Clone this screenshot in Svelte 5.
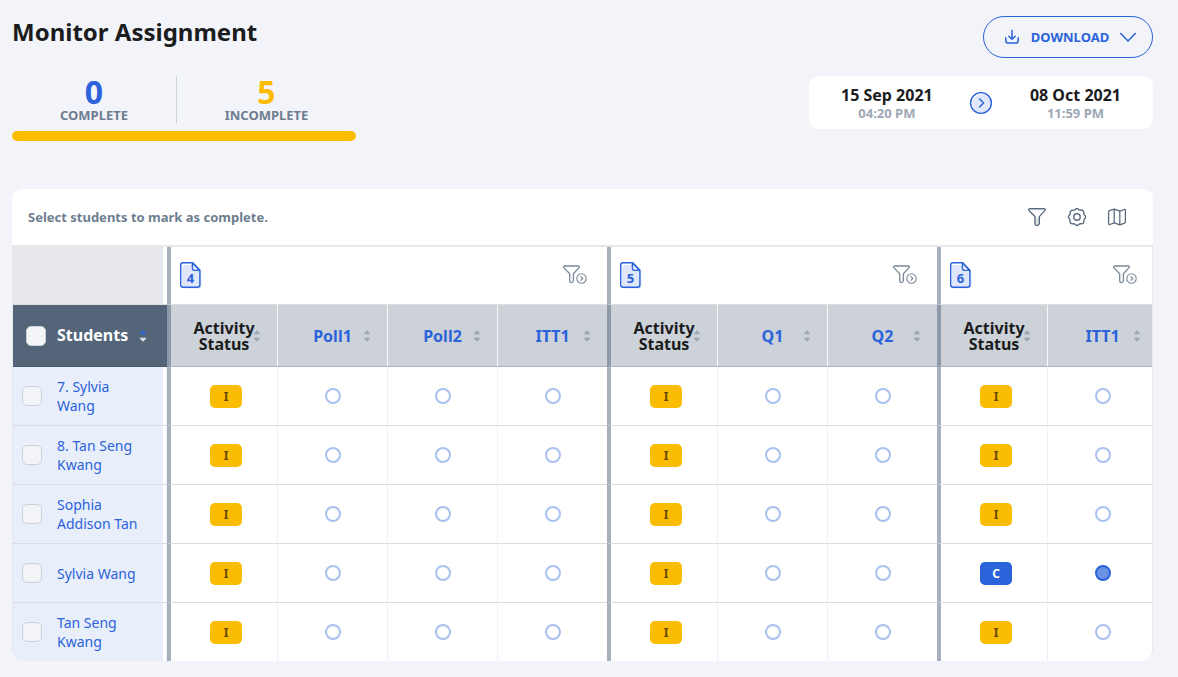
<script>
  const groups = [
    { number: 4, activities: ['Poll1', 'Poll2', 'ITT1'] },
    { number: 5, activities: ['Q1', 'Q2'] },
    { number: 6, activities: ['ITT1'] }
  ];

  let students = $state([
    { name: '7. Sylvia Wang', selected: false, completed: [] },
    { name: '8. Tan Seng Kwang', selected: false, completed: [] },
    { name: 'Sophia Addison Tan', selected: false, completed: [] },
    { name: 'Sylvia Wang', selected: false, completed: [6] },
    { name: 'Tan Seng Kwang', selected: false, completed: [] }
  ]);

  let allSelected = $derived(students.every((s) => s.selected));

  function toggleAll(event) {
    const value = event.currentTarget.checked;
    students.forEach((s) => (s.selected = value));
  }
</script>

{#snippet sorter(label, ascending)}
  <button class="sorter" class:ascending aria-label={label}>
    <svg width="8" height="12" viewBox="0 0 8 12">
      <path class="up" d="M4 .3 7 3.2V4.3H1V3.2Z" />
      <path class="down" d="M4 11.7 7 8.8V7.7H1V8.8Z" />
    </svg>
  </button>
{/snippet}

<main class="page">
  <header class="top">
    <div class="overview">
      <h1>Monitor Assignment</h1>
      <div class="stats">
        <div class="stat complete"><strong>0</strong><span>COMPLETE</span></div>
        <div class="stat incomplete"><strong>5</strong><span>INCOMPLETE</span></div>
      </div>
      <div class="bar"></div>
    </div>

    <div class="side">
      <button class="download">
        <svg width="16" height="16" viewBox="0 0 16 16" fill="none" stroke="currentColor" stroke-width="1.5" stroke-linecap="round" stroke-linejoin="round">
          <path d="M8 1.5V10M4.8 7.2 8 10.2 11.2 7.2M1.8 8.8V11.8Q1.8 14 4 14H12Q14.2 14 14.2 11.8V8.8" />
        </svg>
        <span>DOWNLOAD</span>
        <svg width="16" height="16" viewBox="0 0 16 16" fill="none" stroke="currentColor" stroke-width="1.5" stroke-linecap="round" stroke-linejoin="round">
          <path d="M.8 4.5 8 12 15.2 4.5" />
        </svg>
      </button>
      <div class="dates">
        <div class="date"><strong>15 Sep 2021</strong><span>04:20 PM</span></div>
        <svg class="arrow" width="24" height="24" viewBox="0 0 24 24" fill="none" stroke="#2a63da" stroke-linecap="round" stroke-linejoin="round">
          <circle cx="12" cy="12" r="11" fill="#fff" stroke="none" />
          <circle cx="12.8" cy="12.8" r="9.5" fill="#dfe7f8" stroke="none" />
          <circle cx="12" cy="12" r="10.4" stroke-width="1.4" />
          <path d="M10.6 8 14.6 12 10.6 16" stroke-width="1.4" />
        </svg>
        <div class="date"><strong>08 Oct 2021</strong><span>11:59 PM</span></div>
      </div>
    </div>
  </header>

  <section class="card">
    <div class="toolbar">
      <p>Select students to mark as complete.</p>
      <div class="tools">
        <button aria-label="Filter">
          <svg width="20" height="20" viewBox="0 0 20 20" fill="none" stroke="currentColor" stroke-width="1.4" stroke-linejoin="round">
            <path d="M8.4 10.5 12 10.5 11.8 16 9.8 18.2 8.6 18Z" fill="#e3e7ec" stroke="none" />
            <path d="M2.4 1.8H17.6Q18.7 2.2 18 3.4L12.3 9.6V16.6Q11.7 18.2 10 18.5 8.2 18.5 8 17V9.6L2 3.4Q1.3 2.2 2.4 1.8Z" />
          </svg>
        </button>
        <button aria-label="Settings">
          <svg width="20" height="20" viewBox="0 0 20 20" fill="none" stroke="currentColor" stroke-width="1.4" stroke-linejoin="round">
            <path d="M8 2.7Q10 .2 12 2.7 12.7 3.4 13.8 3.1 16.9 2.8 16.8 6 16.7 7.2 17.5 8 19.7 10 17.5 12 16.7 12.8 16.9 14 17 17 13.9 16.8 12.7 16.6 12 17.3 10 19.7 8 17.3 7.3 16.6 6.1 16.8 3 17.1 3.1 14 3.3 12.8 2.5 12 .3 10 2.5 8 3.3 7.2 3.2 6 3.1 2.9 6.2 3.1 7.3 3.4 8 2.7Z" />
            <circle cx="10" cy="10" r="3.2" />
          </svg>
        </button>
        <button aria-label="Map">
          <svg width="20" height="20" viewBox="0 0 20 20" fill="none" stroke="currentColor" stroke-width="1.3" stroke-linejoin="round">
            <path d="M1.6 4.8Q1.7 4 2.4 3.7L7.2 2.1 12.8 4.1 17.2 2.5Q18.4 2.3 18.4 3.4V15Q18.3 15.8 17.6 16.1L12.8 17.8 7.2 15.8 2.8 17.5Q1.6 17.7 1.6 16.6Z" />
            <path d="M7.2 2.1V15.8M12.8 4.1V17.8" />
          </svg>
        </button>
      </div>
    </div>

    <div class="scroller">
      <table>
        <colgroup>
          <col class="student-col" />
          {#each groups as group}
            <col span={group.activities.length + 1} />
          {/each}
        </colgroup>
        <thead>
          <tr class="groups">
            <td class="corner"></td>
            {#each groups as group}
              <th class="divider" colspan={group.activities.length + 1} scope="colgroup">
                <div class="group">
                  <svg width="24" height="28" viewBox="0 0 24 28" fill="none" stroke="#2a63da" stroke-width="1.4" stroke-linejoin="round">
                    <path d="M5 4H14.5L22.5 11V25Q22.5 27.5 20 27.5H5Q3 27.5 3 25.5V6Q3 4 5 4Z" fill="#dfe7f8" stroke="none" />
                    <path d="M4 1.7H13.8L20.9 9.2V23.8Q20.9 26.3 18.4 26.3H4.2Q1.7 26.3 1.7 23.8V4.2Q1.7 1.7 4.2 1.7Z" />
                    <path d="M13.4 1.9V7Q13.4 9.4 15.8 9.4H20.7Z" fill="#f3f6fd" />
                    <text x="11.5" y="22" text-anchor="middle">{group.number}</text>
                  </svg>
                  <button aria-label="Filter activity {group.number}">
                    <svg width="26" height="22" viewBox="0 0 26 22" fill="none" stroke="currentColor" stroke-width="1.3" stroke-linejoin="round">
                      <path d="M2.3 2H16.8Q17.8 2.5 17.1 3.6L11.4 9.8V16.8Q11 18.4 9.3 18.6 7.8 18.6 7.7 17V9.8L1.8 3.6Q1.2 2.5 2.3 2Z" />
                      <circle cx="19.5" cy="14.5" r="4.7" fill="#fff" stroke-width="1.1" />
                      <path d="M18.5 12.3 20.9 14.5 18.5 16.7" stroke-width="1.1" />
                    </svg>
                  </button>
                </div>
              </th>
            {/each}
          </tr>
          <tr class="heads">
            <th class="students" scope="col">
              <div class="student head">
                <input type="checkbox" aria-label="Select all students" checked={allSelected} onchange={toggleAll} />
                <span>Students</span>
                {@render sorter('Sort by student', true)}
              </div>
            </th>
            {#each groups as group}
              <th class="divider" scope="col">
                <div class="head-cell">
                  <span>Activity<br />Status</span>
                  {@render sorter('Sort by activity status', false)}
                </div>
              </th>
              {#each group.activities as activity}
                <th scope="col">
                  <div class="head-cell">
                    <a href="#activity">{activity}</a>
                    {@render sorter(`Sort by ${activity}`, false)}
                  </div>
                </th>
              {/each}
            {/each}
          </tr>
        </thead>
        <tbody>
          {#each students as student, i}
            <tr>
              <th class="name" scope="row">
                <div class="student">
                  <input type="checkbox" aria-labelledby="student-{i}" bind:checked={student.selected} />
                  <a href="#student" id="student-{i}">{student.name}</a>
                </div>
              </th>
              {#each groups as group}
                {@const done = student.completed.includes(group.number)}
                <td class="divider"><span class="badge" class:done>{done ? 'C' : 'I'}</span></td>
                {#each group.activities as activity}
                  <td><span class="dot" class:done></span></td>
                {/each}
              {/each}
            </tr>
          {/each}
        </tbody>
      </table>
    </div>
  </section>
</main>

<style>
  :global(body) {
    margin: 0;
    background: #f3f4f9;
    font-family: "Noto Sans", sans-serif;
    color: #1b1c1d;
  }
  * {
    box-sizing: border-box;
  }
  button {
    border: 0;
    padding: 0;
    background: none;
    color: inherit;
    font: inherit;
    cursor: pointer;
  }
  a {
    color: #2a63da;
    text-decoration: none;
  }
  svg {
    display: block;
  }
  strong {
    font-weight: 700;
  }
  .page {
    padding: 16px 25px 16px 12px;
  }
  .top {
    display: flex;
    justify-content: space-between;
    margin-bottom: 48px;
  }
  .overview,
  .side {
    width: 344px;
  }
  h1 {
    margin: 0 0 28px;
    font-size: 24px;
    line-height: 32px;
  }
  .stats {
    display: grid;
    grid-template-columns: 165px 1fr;
    height: 47px;
    margin-bottom: 8px;
  }
  .stat {
    display: flex;
    flex-direction: column;
    align-items: center;
    font-weight: 700;
    font-size: 13px;
    line-height: 15px;
    color: #6e7d90;
  }
  .complete {
    border-right: 1px solid #cdd2d9;
  }
  .stat strong {
    font-size: 32px;
    line-height: 32px;
    color: #2a63da;
  }
  .incomplete strong {
    color: #fbbc04;
  }
  .bar {
    height: 10px;
    border-radius: 5px;
    background: #fbbc04;
  }
  .side {
    display: flex;
    flex-direction: column;
    align-items: flex-end;
    gap: 18px;
  }
  .download {
    display: flex;
    align-items: center;
    justify-content: space-between;
    width: 170px;
    height: 42px;
    padding: 0 16px 0 20px;
    border: 1px solid #2a63da;
    border-radius: 21px;
    color: #2a63da;
    font-size: 13px;
    font-weight: 700;
  }
  .dates {
    display: flex;
    align-items: center;
    justify-content: space-between;
    width: 100%;
    height: 53px;
    padding: 0 32px;
    border-radius: 10px;
    background: #fff;
  }
  .date {
    display: flex;
    flex-direction: column;
    align-items: center;
    font-size: 13px;
    line-height: 16px;
    font-weight: 700;
    color: #9da7b3;
  }
  .date strong {
    font-size: 16px;
    line-height: 20px;
    color: #1b1c1d;
  }
  .card {
    overflow: hidden;
    border-radius: 10px;
    background: #fff;
  }
  .toolbar {
    display: flex;
    align-items: center;
    justify-content: space-between;
    height: 58px;
    padding: 0 26px 0 16px;
    border-bottom: 2px solid #e7e8ec;
  }
  .toolbar p {
    margin: 0;
    font-size: 13px;
    font-weight: 700;
    color: #6e7d90;
  }
  .tools {
    display: flex;
    gap: 20px;
    color: #5a6b7f;
  }
  .scroller {
    overflow-x: auto;
    scrollbar-width: none;
    border: solid #e7e8ec;
    border-width: 0 1px;
    border-radius: 0 0 10px 10px;
  }
  table {
    width: 100%;
    min-width: 1144px;
    table-layout: fixed;
    border-spacing: 0;
  }
  .student-col {
    width: 154px;
  }
  th,
  td {
    height: 59px;
    padding: 0;
    border-left: 1px solid #eff0f3;
    border-bottom: 1px solid #dcdddf;
    text-align: center;
  }
  tbody tr:last-child > * {
    height: 58px;
    border-bottom: 0;
  }
  .groups > * {
    height: 58px;
  }
  .divider {
    border-left: 4px solid #a7b0bd;
  }
  td.divider {
    padding-left: 4px;
  }
  .corner,
  .name {
    border-left: 0;
    background: linear-gradient(to right, #e7e8ec 150px, #fff 150px);
  }
  .name {
    background: linear-gradient(to right, #e9eefb 150px, #fff 150px, #fff 153px, #eff0f3 153px);
  }
  .group {
    display: flex;
    align-items: center;
    justify-content: space-between;
    padding: 0 19px 2px 8px;
  }
  .group text {
    font-size: 13px;
    font-weight: 700;
    fill: #2a63da;
    stroke: none;
  }
  .group button {
    color: #7b8898;
  }
  .heads > * {
    height: 62px;
    background: #cdd2d9;
    border-color: #f6f7f9;
    border-bottom-color: #adb4bf;
    font-size: 16px;
    line-height: 16px;
  }
  .heads .divider {
    border-left-color: #8d9aa8;
  }
  .heads .students {
    border-left: 0;
    border-bottom-color: #4a5a6e;
    background: #546579;
    color: #fff;
  }
  .student {
    display: flex;
    align-items: center;
    gap: 15px;
    padding: 0 18px 0 9px;
    font-size: 14px;
    line-height: 19px;
    font-weight: 400;
    text-align: left;
  }
  .name a {
    max-width: 90px;
  }
  .student.head {
    gap: 11px;
    padding: 0 20px 0 13px;
    font-size: 16px;
    font-weight: 700;
  }
  .student.head .sorter {
    margin-left: auto;
  }
  input {
    appearance: none;
    flex: none;
    width: 20px;
    height: 20px;
    margin: 0;
    border: 1px solid #cdd2d9;
    border-radius: 5px;
    background: #f3f4f8;
  }
  input:checked {
    background: #2a63da;
  }
  .head-cell {
    display: grid;
    align-items: center;
  }
  .head-cell > * {
    grid-area: 1 / 1;
  }
  .sorter svg {
    fill: #9da7b3;
  }
  .head-cell .sorter {
    justify-self: end;
    margin-right: 16px;
  }
  .sorter.ascending .up {
    fill: #2a63da;
  }
  .sorter.ascending .down {
    fill: #dde1e6;
  }
  .badge {
    display: block;
    width: 32px;
    margin: 0 auto;
    border-radius: 5px;
    background: #fbbc04;
    color: #644b02;
    font-size: 12px;
    line-height: 23px;
    font-weight: 700;
  }
  .badge.done {
    background: #2a63da;
    color: #fff;
  }
  .dot {
    display: block;
    width: 16px;
    height: 16px;
    margin: 0 auto;
    border: 2px solid #a9c1f0;
    border-radius: 50%;
  }
  .dot.done {
    border-color: #2a63da;
    background: #6a92e5;
  }
</style>
